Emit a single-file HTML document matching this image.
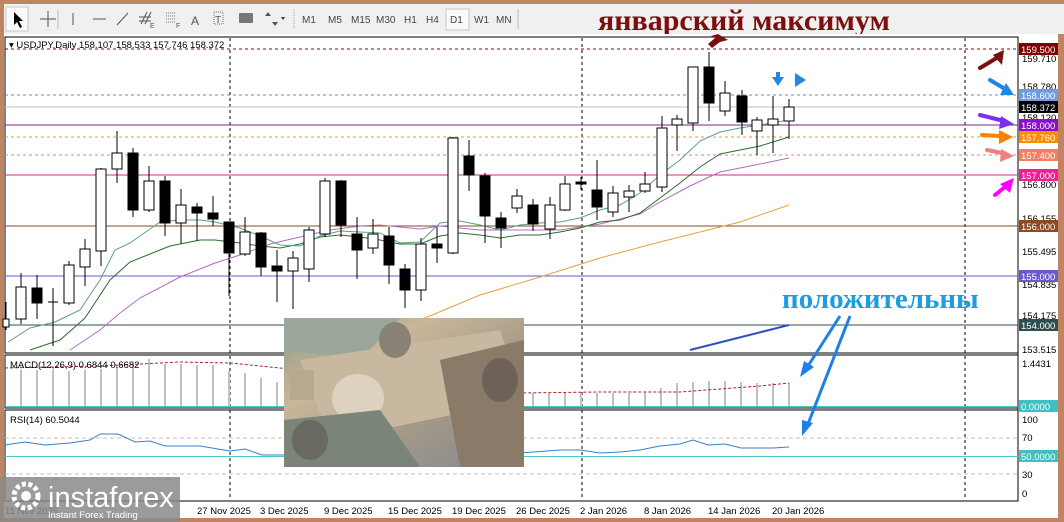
<!DOCTYPE html>
<html><head><meta charset="utf-8"><style>
html,body{margin:0;padding:0;width:1064px;height:522px;overflow:hidden;background:#c08462;font-family:"Liberation Sans",sans-serif}
svg{position:absolute;left:0;top:0}
</style></head><body>
<svg width="1064" height="522" viewBox="0 0 1064 522" xmlns="http://www.w3.org/2000/svg" font-family="Liberation Sans, sans-serif">
<rect x="0" y="0" width="1064" height="522" fill="#c08462"/>
<rect x="4" y="4" width="1060" height="30" fill="#f0f0f0"/>
<rect x="6" y="7" width="22" height="24" fill="#fafafa" stroke="#c8c8c8"/>
<path d="M14 12 L14 25 L17 22 L20 28 L22 27 L19 21 L23 21 Z" fill="#000"/>
<path d="M48 11v16M40 19h16" stroke="#555"/>
<line x1="58" y1="10" x2="58" y2="29" stroke="#bbb"/>
<line x1="73" y1="13" x2="73" y2="25" stroke="#555"/>
<line x1="93" y1="19" x2="106" y2="19" stroke="#555"/>
<line x1="117" y1="25" x2="128" y2="13" stroke="#555"/>
<path d="M141 24l6-12M145 24l6-12M139 17h12M139 21h12" stroke="#555"/>
<text x="150" y="28" font-size="7" fill="#555">E</text>
<path d="M166 13h10M166 16h10M166 19h10M166 22h10" stroke="#777" stroke-dasharray="1 1"/>
<text x="176" y="28" font-size="7" fill="#555">F</text>
<text x="191" y="25" font-size="12" fill="#555">A</text>
<rect x="214" y="12" width="9" height="12" fill="none" stroke="#777" stroke-dasharray="1 1"/>
<text x="215" y="23" font-size="10" fill="#555">T</text>
<rect x="239" y="13" width="14" height="10" rx="1" fill="#777"/>
<path d="M268 12l-3 4h6zM272 22l3 4 3-4z" fill="#555"/><path d="M283 17l-2 3h4z" fill="#333" transform="rotate(180 283 18.5)"/>
<line x1="294" y1="9" x2="294" y2="29" stroke="#aaa" stroke-dasharray="1 1"/>
<g font-size="10" fill="#444">
<text x="302" y="23">M1</text><text x="328" y="23">M5</text><text x="351" y="23">M15</text><text x="376" y="23">M30</text><text x="404" y="23">H1</text><text x="426" y="23">H4</text>
<rect x="446" y="9" width="23" height="21" fill="#fafafa" stroke="#c8c8c8"/><text x="450" y="23">D1</text><text x="474" y="23">W1</text><text x="496" y="23">MN</text>
</g>
<line x1="518" y1="9" x2="518" y2="29" stroke="#bbb"/>
<text x="598" y="30" font-family="Liberation Serif, serif" font-weight="bold" font-size="30" fill="#7b0f0f">январский максимум</text>

<rect x="4" y="34" width="1054" height="484" fill="#fff"/>
<rect x="5" y="37" width="1013" height="316" fill="#fff" stroke="#000"/>
<rect x="5" y="355" width="1013" height="53" fill="#fff" stroke="#000"/>
<rect x="5" y="410" width="1013" height="91" fill="#fff" stroke="#000"/>
<line x1="1018" y1="37" x2="1018" y2="501" stroke="#000"/>
<text x="9" y="48" font-size="9.5" fill="#000">▾ USDJPY,Daily  158.107 158.533 157.746 158.372</text>

<g stroke="#000" stroke-dasharray="3 3">
<line x1="230" y1="38" x2="230" y2="500"/><line x1="582" y1="38" x2="582" y2="500"/><line x1="965" y1="38" x2="965" y2="500"/>
</g>
<line x1="5" y1="49" x2="1018" y2="49" stroke="#7a1010" stroke-dasharray="3 3"/>
<line x1="5" y1="95" x2="1018" y2="95" stroke="#6c8aa8" stroke-dasharray="3 3"/>
<line x1="5" y1="107" x2="1018" y2="107" stroke="#c0c0c0"/>
<line x1="5" y1="125" x2="1018" y2="125" stroke="#7b1fa2"/>
<line x1="5" y1="137" x2="1018" y2="137" stroke="#e6a020" stroke-dasharray="3 3"/>
<line x1="5" y1="155" x2="1018" y2="155" stroke="#e08a70" stroke-dasharray="3 3"/>
<line x1="5" y1="175" x2="1018" y2="175" stroke="#c03090"/>
<line x1="5" y1="226" x2="1018" y2="226" stroke="#8b4a20"/>
<line x1="5" y1="276" x2="1018" y2="276" stroke="#6a5acd"/>
<line x1="5" y1="325" x2="1018" y2="325" stroke="#2f4f4f"/>

<polyline fill="none" stroke="#e8a040" stroke-width="1" points="360,337 420,320 480,295 540,277 600,258 660,242 700,232 740,222 789,205"/>
<polyline fill="none" stroke="#3050c0" stroke-width="2" points="690,350 789,325"/>
<polyline fill="none" stroke="#b070c0" stroke-width="1" points="70,350 100,330 120,313 140,298 180,277 215,263 240,255 270,244 300,237 330,230 360,226 380,225 400,227 420,229 440,226 480,230 520,230 560,230 600,224 640,214 660,202 690,186 720,172 760,164 789,158"/>
<polyline fill="none" stroke="#2e6b2e" stroke-width="1" points="30,350 60,340 85,318 110,280 130,262 150,254 170,246 200,240 215,240 240,243 260,246 280,248 300,244 320,237 340,235 360,237 380,240 400,244 420,244 440,236 460,233 480,235 500,238 520,235 540,235 560,232 580,228 600,222 620,220 640,213 660,198 680,183 700,167 720,154 740,150 760,146 789,137"/>
<polyline fill="none" stroke="#5aa08a" stroke-width="1" points="8,342 30,328 55,322 80,310 100,280 115,250 130,243 150,229 160,222 180,220 200,220 215,222 240,228 260,236 280,245 300,246 320,236 340,231 360,232 380,233 400,243 420,242 440,223 460,221 480,225 500,230 520,225 540,223 560,222 580,218 600,210 620,205 640,193 660,175 680,160 700,141 720,132 740,128 760,125 789,120"/>

<g stroke="#000" stroke-width="1">
<line x1="6" y1="302" x2="6" y2="330"/><rect x="3" y="319" width="6" height="8" fill="#fff"/>
<line x1="21" y1="273" x2="21" y2="324"/><rect x="16" y="287" width="10" height="32" fill="#fff"/>
<line x1="37" y1="275" x2="37" y2="319"/><rect x="32" y="288" width="10" height="15" fill="#000"/>
<line x1="53" y1="288" x2="53" y2="346"/><line x1="48" y1="302" x2="58" y2="302"/>
<line x1="69" y1="261" x2="69" y2="305"/><rect x="64" y="265" width="10" height="38" fill="#fff"/>
<line x1="85" y1="239" x2="85" y2="286"/><rect x="80" y="249" width="10" height="18" fill="#fff"/>
<line x1="101" y1="168" x2="101" y2="266"/><rect x="96" y="169" width="10" height="82" fill="#fff"/>
<line x1="117" y1="131" x2="117" y2="183"/><rect x="112" y="153" width="10" height="16" fill="#fff"/>
<line x1="133" y1="148" x2="133" y2="217"/><rect x="128" y="153" width="10" height="57" fill="#000"/>
<line x1="149" y1="166" x2="149" y2="212"/><rect x="144" y="181" width="10" height="29" fill="#fff"/>
<line x1="165" y1="176" x2="165" y2="236"/><rect x="160" y="181" width="10" height="42" fill="#000"/>
<line x1="181" y1="189" x2="181" y2="244"/><rect x="176" y="205" width="10" height="18" fill="#fff"/>
<line x1="197" y1="203" x2="197" y2="241"/><rect x="192" y="207" width="10" height="6" fill="#000"/>
<line x1="213" y1="196" x2="213" y2="226"/><rect x="208" y="213" width="10" height="6" fill="#000"/>
<line x1="229" y1="222" x2="229" y2="296"/><rect x="224" y="222" width="10" height="31" fill="#000"/>
<line x1="245" y1="217" x2="245" y2="256"/><rect x="240" y="232" width="10" height="22" fill="#fff"/>
<line x1="261" y1="232" x2="261" y2="276"/><rect x="256" y="233" width="10" height="34" fill="#000"/>
<line x1="277" y1="250" x2="277" y2="302"/><rect x="272" y="266" width="10" height="5" fill="#000"/>
<line x1="293" y1="251" x2="293" y2="309"/><rect x="288" y="258" width="10" height="13" fill="#fff"/>
<line x1="309" y1="227" x2="309" y2="282"/><rect x="304" y="230" width="10" height="39" fill="#fff"/>
<line x1="325" y1="178" x2="325" y2="237"/><rect x="320" y="181" width="10" height="53" fill="#fff"/>
<line x1="341" y1="180" x2="341" y2="237"/><rect x="336" y="181" width="10" height="44" fill="#000"/>
<line x1="357" y1="217" x2="357" y2="279"/><rect x="352" y="234" width="10" height="16" fill="#000"/>
<line x1="373" y1="219" x2="373" y2="254"/><rect x="368" y="234" width="10" height="14" fill="#fff"/>
<line x1="389" y1="227" x2="389" y2="284"/><rect x="384" y="236" width="10" height="29" fill="#000"/>
<line x1="405" y1="264" x2="405" y2="308"/><rect x="400" y="269" width="10" height="21" fill="#000"/>
<line x1="421" y1="238" x2="421" y2="301"/><rect x="416" y="244" width="10" height="46" fill="#fff"/>
<line x1="437" y1="227" x2="437" y2="263"/><rect x="432" y="244" width="10" height="4" fill="#000"/>
<line x1="453" y1="137" x2="453" y2="254"/><rect x="448" y="138" width="10" height="115" fill="#fff"/>
<line x1="469" y1="140" x2="469" y2="191"/><rect x="464" y="156" width="10" height="19" fill="#000"/>
<line x1="485" y1="173" x2="485" y2="243"/><rect x="480" y="176" width="10" height="40" fill="#000"/>
<line x1="501" y1="212" x2="501" y2="248"/><rect x="496" y="218" width="10" height="10" fill="#000"/>
<line x1="517" y1="189" x2="517" y2="213"/><rect x="512" y="196" width="10" height="12" fill="#fff"/>
<line x1="533" y1="199" x2="533" y2="231"/><rect x="528" y="205" width="10" height="19" fill="#000"/>
<line x1="550" y1="197" x2="550" y2="239"/><rect x="545" y="205" width="10" height="24" fill="#fff"/>
<line x1="565" y1="176" x2="565" y2="211"/><rect x="560" y="184" width="10" height="26" fill="#fff"/>
<line x1="581" y1="177" x2="581" y2="190"/><rect x="576" y="182" width="10" height="2" fill="#000"/>
<line x1="597" y1="160" x2="597" y2="220"/><rect x="592" y="190" width="10" height="17" fill="#000"/>
<line x1="613" y1="186" x2="613" y2="217"/><rect x="608" y="193" width="10" height="19" fill="#fff"/>
<line x1="629" y1="185" x2="629" y2="212"/><rect x="624" y="191" width="10" height="6" fill="#fff"/>
<line x1="645" y1="172" x2="645" y2="193"/><rect x="640" y="184" width="10" height="7" fill="#fff"/>
<line x1="662" y1="116" x2="662" y2="192"/><rect x="657" y="128" width="10" height="59" fill="#fff"/>
<line x1="677" y1="115" x2="677" y2="151"/><rect x="672" y="119" width="10" height="6" fill="#fff"/>
<line x1="693" y1="67" x2="693" y2="131"/><rect x="688" y="67" width="10" height="56" fill="#fff"/>
<line x1="709" y1="52" x2="709" y2="121"/><rect x="704" y="67" width="10" height="36" fill="#000"/>
<line x1="725" y1="81" x2="725" y2="116"/><rect x="720" y="93" width="10" height="18" fill="#fff"/>
<line x1="742" y1="90" x2="742" y2="135"/><rect x="737" y="96" width="10" height="26" fill="#000"/>
<line x1="757" y1="117" x2="757" y2="155"/><rect x="752" y="120" width="10" height="11" fill="#fff"/>
<line x1="773" y1="96" x2="773" y2="153"/><rect x="768" y="119" width="10" height="6" fill="#fff"/>
<line x1="789" y1="99" x2="789" y2="139"/><rect x="784" y="107" width="10" height="14" fill="#fff"/>
</g>

<path d="M718 34 L728 40 L720 42 L712 48 L708 44 L715 38 L711 36Z" fill="#7a1010"/>
<path d="M776 72h4v5h4l-6 9-6-9h4z" fill="#1e88e5"/>
<path d="M795 73l11 7-11 7z" fill="#1e88e5"/>

<g stroke-width="4" stroke-linecap="round">
<line x1="980" y1="68" x2="1000" y2="56" stroke="#7a1010"/><path d="M1004 50l-2 15-9-10z" fill="#7a1010"/>
<line x1="990" y1="80" x2="1005" y2="89" stroke="#1e88e5"/><path d="M1014 95l-14 0 6-12z" fill="#1e88e5"/>
<line x1="980" y1="115" x2="1000" y2="120" stroke="#7b2ff0"/><path d="M1014 124l-15 5 2-13z" fill="#7b2ff0"/>
<line x1="982" y1="135" x2="1000" y2="136" stroke="#ff7f00"/><path d="M1013 137l-14 7 0-14z" fill="#ff7f00"/>
<line x1="987" y1="150" x2="1002" y2="153" stroke="#f08080"/><path d="M1014 156l-14 6 1-13z" fill="#f08080"/>
<line x1="995" y1="195" x2="1005" y2="187" stroke="#ff00ff"/><path d="M1014 178l-4 15-10-9z" fill="#ff00ff"/>
</g>

<g stroke="#c0c0c0" stroke-width="2">
<line x1="21" y1="407" x2="21" y2="370"/><line x1="37" y1="407" x2="37" y2="370"/><line x1="53" y1="407" x2="53" y2="370"/><line x1="69" y1="407" x2="69" y2="371"/><line x1="85" y1="407" x2="85" y2="370"/><line x1="101" y1="407" x2="101" y2="369"/><line x1="117" y1="407" x2="117" y2="365"/><line x1="133" y1="407" x2="133" y2="364"/><line x1="149" y1="407" x2="149" y2="359"/><line x1="165" y1="407" x2="165" y2="364"/><line x1="181" y1="407" x2="181" y2="364"/><line x1="197" y1="407" x2="197" y2="365"/><line x1="213" y1="407" x2="213" y2="365"/><line x1="229" y1="407" x2="229" y2="371"/><line x1="245" y1="407" x2="245" y2="373"/><line x1="261" y1="407" x2="261" y2="378"/><line x1="277" y1="407" x2="277" y2="382"/>
<line x1="533" y1="407" x2="533" y2="393"/><line x1="549" y1="407" x2="549" y2="393"/><line x1="565" y1="407" x2="565" y2="393"/><line x1="581" y1="407" x2="581" y2="393"/><line x1="597" y1="407" x2="597" y2="393"/><line x1="613" y1="407" x2="613" y2="393"/><line x1="629" y1="407" x2="629" y2="393"/><line x1="645" y1="407" x2="645" y2="392"/><line x1="661" y1="407" x2="661" y2="388"/><line x1="677" y1="407" x2="677" y2="383"/><line x1="693" y1="407" x2="693" y2="382"/><line x1="709" y1="407" x2="709" y2="381"/><line x1="725" y1="407" x2="725" y2="381"/><line x1="741" y1="407" x2="741" y2="382"/><line x1="757" y1="407" x2="757" y2="383"/><line x1="773" y1="407" x2="773" y2="383"/><line x1="789" y1="407" x2="789" y2="383"/>
</g>
<polyline fill="none" stroke="#b22222" stroke-dasharray="3 2" points="5,368 100,366 180,362 230,363 280,368 520,393 600,392 680,392 720,389 760,386 789,383"/>
<line x1="5" y1="406.5" x2="1018" y2="406.5" stroke="#50c8c8"/>
<text x="10" y="368" font-size="9.5" fill="#000">MACD(12,26,9) 0.6844 0.6682</text>

<line x1="5" y1="438" x2="1018" y2="438" stroke="#c0c0c0" stroke-dasharray="4 3"/>
<line x1="5" y1="474" x2="1018" y2="474" stroke="#c0c0c0" stroke-dasharray="4 3"/>
<line x1="5" y1="456.5" x2="1018" y2="456.5" stroke="#50c8c8"/>
<polyline fill="none" stroke="#3a7fc8" points="5,445 25,442 45,445 70,443 90,440 100,434 118,434 135,442 150,441 165,446 200,446 230,451 245,449 262,455 284,455 520,453 560,450 580,450 600,453 620,452 640,450 660,446 680,444 693,440 708,445 725,444 741,448 773,448 789,447"/>
<text x="10" y="423" font-size="9.5" fill="#000">RSI(14) 60.5044</text>

<g font-size="9.5" fill="#000">
<text x="1022" y="62">159.710</text>
<text x="1022" y="90">158.780</text>
<text x="1022" y="121">158.120</text>
<text x="1022" y="188">156.800</text>
<text x="1022" y="222">156.155</text>
<text x="1022" y="255">155.495</text>
<text x="1022" y="288">154.835</text>
<text x="1022" y="319">154.175</text>
<text x="1022" y="353">153.515</text>
<text x="1022" y="367">1.4431</text>
<text x="1022" y="441">70</text><text x="1022" y="478">30</text><text x="1022" y="497">0</text><text x="1022" y="423">100</text>
</g>
<g font-size="9.5" fill="#fff">
<rect x="1019" y="43" width="39" height="12" fill="#800000"/><text x="1021" y="53">159.500</text>
<rect x="1019" y="89" width="39" height="12" fill="#6f9be0"/><text x="1021" y="99">158.600</text>
<rect x="1019" y="101" width="39" height="12" fill="#000"/><text x="1021" y="111">158.372</text>
<rect x="1019" y="119" width="39" height="12" fill="#8a10c8"/><text x="1021" y="129">158.000</text>
<rect x="1019" y="131" width="39" height="12" fill="#ff8c00"/><text x="1021" y="141">157.760</text>
<rect x="1019" y="149" width="39" height="12" fill="#f08060"/><text x="1021" y="159">157.400</text>
<rect x="1019" y="169" width="39" height="12" fill="#ee1f90"/><text x="1021" y="179">157.000</text>
<rect x="1019" y="220" width="39" height="12" fill="#8b4a20"/><text x="1021" y="230">156.000</text>
<rect x="1019" y="270" width="39" height="12" fill="#6a5acd"/><text x="1021" y="280">155.000</text>
<rect x="1019" y="319" width="39" height="12" fill="#2f4f4f"/><text x="1021" y="329">154.000</text>
<rect x="1019" y="400" width="39" height="12" fill="#40c0c0"/><text x="1021" y="410">0.0000</text>
<rect x="1019" y="450" width="39" height="12" fill="#40c0c0"/><text x="1021" y="460">50.0000</text>
</g>

<g font-size="9.5" fill="#000">
<text x="5" y="514">11 Nov 2025</text><text x="197" y="514">27 Nov 2025</text><text x="260" y="514">3 Dec 2025</text><text x="324" y="514">9 Dec 2025</text><text x="388" y="514">15 Dec 2025</text><text x="452" y="514">19 Dec 2025</text><text x="516" y="514">26 Dec 2025</text><text x="580" y="514">2 Jan 2026</text><text x="644" y="514">8 Jan 2026</text><text x="708" y="514">14 Jan 2026</text><text x="772" y="514">20 Jan 2026</text>
</g>

<defs>
<linearGradient id="m1" x1="0" y1="0" x2="1" y2="1"><stop offset="0" stop-color="#8a9a88"/><stop offset="0.3" stop-color="#c9b79a"/><stop offset="0.6" stop-color="#a89a88"/><stop offset="1" stop-color="#7f8890"/></linearGradient>
</defs>
<rect x="284" y="318" width="240" height="149" fill="url(#m1)"/>
<polygon points="284,318 400,318 360,360 284,350" fill="#9aa79a"/>
<polygon points="300,360 500,330 524,400 330,440" fill="#c8b8a0"/>
<ellipse cx="358" cy="398" rx="26" ry="24" fill="#ddd2c0"/>
<rect x="290" y="370" width="24" height="30" fill="#b8a890"/>
<polygon points="284,420 380,410 420,467 284,467" fill="#7a8478"/>
<ellipse cx="310" cy="440" rx="18" ry="20" fill="#6a6a62"/>
<ellipse cx="395" cy="340" rx="16" ry="18" fill="#8a8276"/>
<polygon points="440,360 524,340 524,467 460,467" fill="#8a7a68"/>
<ellipse cx="500" cy="380" rx="18" ry="22" fill="#6e6258"/>

<text x="782" y="308" font-family="Liberation Serif, serif" font-weight="bold" font-size="29" fill="#1e9ce0">положительны</text>
<g stroke="#1e7fe8" stroke-width="3">
<line x1="840" y1="316" x2="808" y2="366"/><line x1="850" y1="316" x2="808" y2="424"/>
</g>
<path d="M800 377l4-16 10 6z" fill="#1e7fe8"/>
<path d="M802 436l0-16 11 3z" fill="#1e7fe8"/>

<rect x="0" y="477" width="180" height="45" fill="#8a8a8a" opacity="0.85"/>
<circle cx="26" cy="496" r="12" fill="none" stroke="#fff" stroke-width="5" stroke-dasharray="4 2.5"/>
<circle cx="26" cy="496" r="5" fill="#fff"/>
<text x="48" y="507" font-size="29" fill="#fff">instaforex</text>
<text x="48" y="518" font-size="9.5" fill="#fff">Instant Forex Trading</text>
</svg>
</body></html>
